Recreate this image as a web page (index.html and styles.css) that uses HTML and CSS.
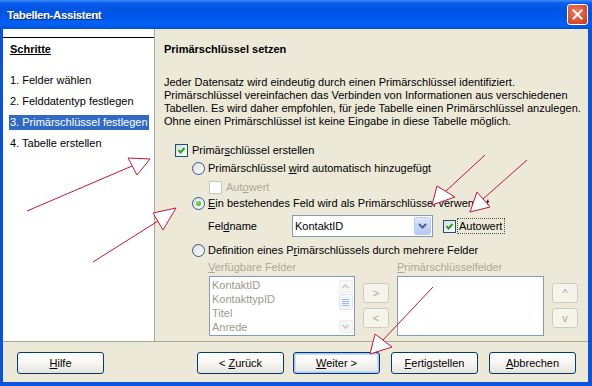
FILE: index.html
```html
<!DOCTYPE html>
<html lang="de">
<head>
    <meta charset="UTF-8">
    <title>Tabellen-Assistent</title>
    <link rel="stylesheet" href="styles.css">
</head>
<body>

    <div class="window">
        <div class="titlebar">
            <span class="title">Tabellen-Assistent</span>
            <span class="close">
                <svg width="11" height="11" viewBox="0 0 11 11"><path d="M1.5 1.5 L9.5 9.5 M9.5 1.5 L1.5 9.5" stroke="#fff" stroke-width="2" stroke-linecap="square"/></svg>
            </span>
        </div>

        <div class="client">
            <div class="main">
                <!-- roadmap -->
                <div class="steps">
                    <div class="steps-head">Schritte</div>
                    <ul class="step-list">
                        <li>1. Felder wählen</li>
                        <li>2. Felddatentyp festlegen</li>
                        <li><span class="current">3. Primärschlüssel festlegen</span></li>
                        <li>4. Tabelle erstellen</li>
                    </ul>
                </div>

                <div class="page">
                    <h1>Primärschlüssel setzen</h1>
                    <p class="intro">Jeder Datensatz wird eindeutig durch einen Primärschlüssel identifiziert.<br>Primärschlüssel vereinfachen das Verbinden von Informationen aus verschiedenen<br>Tabellen. Es wird daher empfohlen, für jede Tabelle einen Primärschlüssel anzulegen.<br>Ohne einen Primärschlüssel ist keine Eingabe in diese Tabelle möglich.</p>

                    <div class="opt row-create">
                        <span class="cb"><svg width="11" height="11" viewBox="0 0 11 11"><path d="M2.5 5 L4.5 7.5 L8.5 3" fill="none" stroke="#21a121" stroke-width="2"/></svg></span>
                        <span>Primär<u>s</u>chlüssel erstellen</span>
                    </div>
                    <div class="opt row-auto">
                        <span class="rb"></span>
                        <span>Primärschlüssel <u>w</u>ird automatisch hinzugefügt</span>
                    </div>
                    <div class="opt row-autowert disabled">
                        <span class="cb off"></span>
                        <span>Aut<u>o</u>wert</span>
                    </div>
                    <div class="opt row-existing">
                        <span class="rb on"><span class="dot"></span></span>
                        <span><u>E</u>in bestehendes Feld wird als Primärschlüssel verwendet</span>
                    </div>
                    <div class="opt row-field">
                        <span class="field-label">Fel<u>d</u>name</span>
                        <div class="combo">
                            <span class="combo-text">KontaktID</span>
                            <span class="combo-btn"><svg width="9" height="6" viewBox="0 0 9 6"><path d="M1 1 L4.5 4.5 L8 1" fill="none" stroke="#4d6185" stroke-width="2"/></svg></span>
                        </div>
                        <span class="cb"><svg width="11" height="11" viewBox="0 0 11 11"><path d="M2.5 5 L4.5 7.5 L8.5 3" fill="none" stroke="#21a121" stroke-width="2"/></svg></span>
                        <span class="focus">Autowert</span>
                    </div>
                    <div class="opt row-multi">
                        <span class="rb"></span>
                        <span>Definition eines P<u>r</u>imärschlüssels durch mehrere Felder</span>
                    </div>
                    <div class="opt row-labels disabled">
                        <span class="list-label"><u>V</u>erfügbare Felder</span>
                        <span class="list-label right"><u>P</u>rimärschlüsselfelder</span>
                    </div>
                    <div class="row-lists">
                        <div class="listbox">
                            <ul class="items">
                                <li>KontaktID</li>
                                <li>KontakttypID</li>
                                <li>Titel</li>
                                <li>Anrede</li>
                            </ul>
                            <div class="scrollbar">
                                <span class="sb-btn">
                                    <svg width="7" height="5" viewBox="0 0 7 5"><path d="M0.5 4 L3.5 1 L6.5 4" fill="none" stroke="#c3c8d4" stroke-width="1.5"/></svg>
                                </span>
                                <span class="sb-thumb"><span></span><span></span><span></span><span></span></span>
                                <span class="sb-btn bottom">
                                    <svg width="7" height="5" viewBox="0 0 7 5"><path d="M0.5 1 L3.5 4 L6.5 1" fill="none" stroke="#c3c8d4" stroke-width="1.5"/></svg>
                                </span>
                            </div>
                        </div>
                        <div class="move-btns">
                            <span class="small-btn">&gt;</span>
                            <span class="small-btn">&lt;</span>
                        </div>
                        <div class="listbox wide"></div>
                        <div class="move-btns">
                            <span class="small-btn">^</span>
                            <span class="small-btn">v</span>
                        </div>
                    </div>
                </div>
            </div>

            <div class="footer">
                <span class="btn help"><span><u>H</u>ilfe</span></span>
                <span class="btn back"><span>&lt; <u>Z</u>urück</span></span>
                <span class="btn default"><span><u>W</u>eiter &gt;</span></span>
                <span class="btn"><span><u>F</u>ertigstellen</span></span>
                <span class="btn"><span><u>A</u>bbrechen</span></span>
            </div>
        </div>

        <!-- red arrows drawn over the screenshot -->
        <svg class="marks" width="592" height="386" viewBox="0 0 592 386">
            <g fill="#fff" stroke="#c8143a" stroke-width="1">
                <line x1="27" y1="211" x2="132" y2="166"/>
                <polygon points="150,159 128,158 137,175"/>
                <line x1="93" y1="262" x2="158" y2="221"/>
                <polygon points="176,208 153,213 163,230"/>
                <line x1="485" y1="155" x2="446" y2="191"/>
                <polygon points="432,205 437,186 455,197"/>
                <line x1="527" y1="160" x2="483" y2="199"/>
                <polygon points="470,212 477,192 490,207"/>
                <line x1="433" y1="287" x2="383" y2="340"/>
                <polygon points="370,354 375,334 392,347"/>
            </g>
        </svg>
    </div>

</body>
</html>
```

FILE: styles.css
```css
body {
    margin: 0;
    font-family: "Liberation Sans", Arial, sans-serif;
    font-size: 11px;
    color: #000;
}
.window {
    position: relative;
    width: 592px;
    height: 386px;
    background-color: #0b52dc;
    display: flex;
    flex-direction: column;
}
.titlebar {
    height: 29px;
    flex: none;
    display: flex;
    align-items: center;
    justify-content: space-between;
    padding: 0 4px 0 7px;
    background: linear-gradient(#3b8ffb 0, #0a5ded 3px, #0054e3 9px, #0056ea 17px, #0063f6 24px, #004fd6 29px);
}
.title {
    color: #fff;
    font-weight: bold;
    font-size: 11.5px;
    letter-spacing: -0.4px;
    text-shadow: 1px 1px #0a2a8c;
}
.close {
    width: 21px;
    height: 21px;
    box-sizing: border-box;
    border: 1px solid #fff;
    border-radius: 3px;
    background: radial-gradient(circle at 40% 35%, #f07a5c, #d9482b 70%, #c13a1c);
    display: flex;
    align-items: center;
    justify-content: center;
}
.client {
    flex: 1;
    min-height: 0;
    margin: 0 4px 4px 3px;
    background-color: #ece9d8;
    display: flex;
    flex-direction: column;
}
.main {
    flex: 1;
    min-height: 0;
    display: flex;
}

/* roadmap on the left */
.steps {
    width: 151px;
    flex: none;
    background-color: #fff;
    border-right: 1px solid #aca899;
    padding-top: 8px;
}
.steps-head {
    border-top: 1px solid #000;
    padding: 4px 7px 0;
    line-height: 15px;
    font-weight: bold;
    text-decoration: underline;
}
.step-list {
    list-style: none;
    margin: 16px 0 0;
    padding: 0 0 0 7px;
}
.step-list li {
    line-height: 15px;
    margin-bottom: 6px;
    white-space: nowrap;
}
.step-list .current {
    display: inline-block;
    background-color: #316ac5;
    color: #fff;
    padding: 0 1px;
    margin-left: -1px;
}

/* page content */
.page {
    flex: 1;
    padding: 13px 0 0 9px;
}
.page h1 {
    margin: 0;
    font-size: 11px;
    line-height: 15px;
    font-weight: bold;
}
.intro {
    margin: 19px 0 0;
    line-height: 13px;
    white-space: nowrap;
}
.opt {
    display: flex;
    align-items: center;
    height: 16px;
    white-space: nowrap;
}
.disabled {
    color: #aca899;
}
.row-create { margin-top: 14px; padding-left: 11px; }
.row-auto { margin-top: 2px; padding-left: 28px; }
.row-autowert { margin-top: 3px; padding-left: 45px; }
.row-existing { margin-top: 0; padding-left: 28px; }
.row-field { margin-top: 4px; height: 22px; padding-left: 44px; }
.row-multi { margin-top: 5px; padding-left: 28px; }
.row-labels { margin-top: 1px; padding-left: 44px; }

.cb {
    width: 13px;
    height: 13px;
    flex: none;
    box-sizing: border-box;
    border: 1px solid #1c5180;
    background: linear-gradient(135deg, #dcdcd7, #fff);
    margin-right: 4px;
    display: flex;
    align-items: center;
    justify-content: center;
}
.cb.off {
    border-color: #cac8bb;
    background: #fff;
}
.rb {
    width: 13px;
    height: 13px;
    flex: none;
    box-sizing: border-box;
    border: 1px solid #2f5a8c;
    border-radius: 50%;
    background: linear-gradient(135deg, #dcdcd7, #fff);
    margin-right: 3px;
    display: flex;
    align-items: center;
    justify-content: center;
}
.rb .dot {
    width: 5px;
    height: 5px;
    border-radius: 50%;
    background: radial-gradient(circle at 35% 35%, #8ae07a, #21a121);
}
.field-label {
    width: 84px;
    flex: none;
}
.combo {
    width: 141px;
    height: 22px;
    box-sizing: border-box;
    border: 1px solid #7f9db9;
    background-color: #fff;
    display: flex;
    align-items: center;
    padding: 1px;
    margin-right: 10px;
}
.combo-text {
    flex: 1;
    padding-left: 1px;
}
.combo-btn {
    width: 17px;
    height: 18px;
    box-sizing: border-box;
    border: 1px solid #b9cbf3;
    border-radius: 2px;
    background: linear-gradient(#dde6fb, #c1d3fb 60%, #b4c6f3);
    display: flex;
    align-items: center;
    justify-content: center;
}
.focus {
    outline: 1px dotted #555;
    padding: 1px 2px 1px 1px;
    margin-left: -2px;
    line-height: 12px;
}
.list-label {
    width: 189px;
}
.list-label.right {
    width: auto;
}

/* the two lists */
.row-lists {
    display: flex;
    margin-top: 1px;
    padding-left: 45px;
}
.listbox {
    width: 146px;
    height: 60px;
    box-sizing: border-box;
    border: 1px solid #7f9db9;
    background-color: #fff;
    display: flex;
}
.listbox.wide {
    width: 147px;
}
.items {
    list-style: none;
    margin: 0;
    padding: 1px 0 0 2px;
    flex: 1;
    color: #9d9a8c;
}
.items li {
    line-height: 14px;
}
.scrollbar {
    width: 15px;
    display: flex;
    flex-direction: column;
    align-items: center;
    padding-top: 3px;
    margin-right: 1px;
}
.sb-btn {
    width: 14px;
    height: 13px;
    box-sizing: border-box;
    border: 1px solid #eceef2;
    border-radius: 2px;
    background-color: #f6f6f4;
    display: flex;
    align-items: center;
    justify-content: center;
}
.sb-btn.bottom {
    margin-top: auto;
    margin-bottom: 2px;
}
.sb-thumb {
    width: 14px;
    height: 16px;
    margin-top: 1px;
    box-sizing: border-box;
    border: 1px solid #dde5f6;
    border-radius: 2px;
    background-color: #f3f6fc;
    display: flex;
    flex-direction: column;
    align-items: center;
    justify-content: center;
    gap: 1px;
}
.sb-thumb span {
    width: 7px;
    height: 1px;
    background-color: #9bb8ec;
}
.move-btns {
    display: flex;
    flex-direction: column;
    gap: 5px;
    padding-top: 7px;
    margin: 0 8px;
}
.small-btn {
    width: 26px;
    height: 20px;
    box-sizing: border-box;
    border: 1px solid #cfcdc0;
    border-radius: 3px;
    background-color: #f5f4ea;
    color: #aca899;
    display: flex;
    align-items: center;
    justify-content: center;
}

/* bottom buttons */
.footer {
    height: 41px;
    flex: none;
    box-sizing: border-box;
    border-top: 1px solid #aca899;
    display: flex;
    padding: 10px 0 0 14px;
}
.btn {
    width: 87px;
    height: 22px;
    box-sizing: border-box;
    border: 1px solid #003c74;
    border-radius: 3px;
    background: linear-gradient(#ffffff, #f5f4f0 55%, #e6e3d8);
    display: flex;
    align-items: center;
    justify-content: center;
    margin-right: 11px;
    white-space: pre;
}
.btn.help {
    margin-right: 93px;
}
.btn.back {
    margin-right: 9px;
}
.btn.default {
    box-shadow: inset 0 0 0 1px #a9c4f4, inset 0 0 0 2px #cddcf8;
}
.marks {
    position: absolute;
    top: 0;
    left: 0;
}
```
